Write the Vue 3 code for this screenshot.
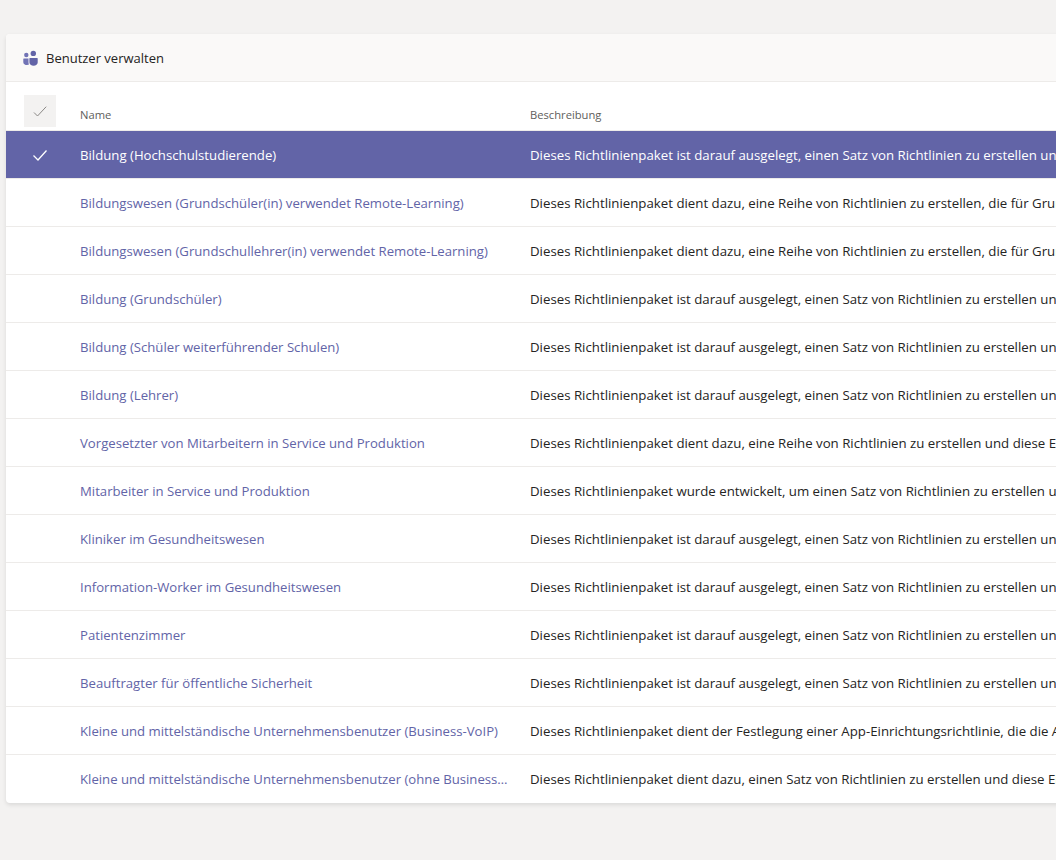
<script setup>
const rows = [
  { name: 'Bildung (Hochschulstudierende)', text: 'Dieses Richtlinienpaket ist darauf ausgelegt, einen Satz von Richtlinien zu erstellen und', selected: true },
  { name: 'Bildungswesen (Grundschüler(in) verwendet Remote-Learning)', text: 'Dieses Richtlinienpaket dient dazu, eine Reihe von Richtlinien zu erstellen, die für Grundschüler' },
  { name: 'Bildungswesen (Grundschullehrer(in) verwendet Remote-Learning)', text: 'Dieses Richtlinienpaket dient dazu, eine Reihe von Richtlinien zu erstellen, die für Grundschullehrer' },
  { name: 'Bildung (Grundschüler)', text: 'Dieses Richtlinienpaket ist darauf ausgelegt, einen Satz von Richtlinien zu erstellen und' },
  { name: 'Bildung (Schüler weiterführender Schulen)', text: 'Dieses Richtlinienpaket ist darauf ausgelegt, einen Satz von Richtlinien zu erstellen und' },
  { name: 'Bildung (Lehrer)', text: 'Dieses Richtlinienpaket ist darauf ausgelegt, einen Satz von Richtlinien zu erstellen und' },
  { name: 'Vorgesetzter von Mitarbeitern in Service und Produktion', text: 'Dieses Richtlinienpaket dient dazu, eine Reihe von Richtlinien zu erstellen und diese Einstellungen' },
  { name: 'Mitarbeiter in Service und Produktion', text: 'Dieses Richtlinienpaket wurde entwickelt, um einen Satz von Richtlinien zu erstellen und' },
  { name: 'Kliniker im Gesundheitswesen', text: 'Dieses Richtlinienpaket ist darauf ausgelegt, einen Satz von Richtlinien zu erstellen und' },
  { name: 'Information-Worker im Gesundheitswesen', text: 'Dieses Richtlinienpaket ist darauf ausgelegt, einen Satz von Richtlinien zu erstellen und' },
  { name: 'Patientenzimmer', text: 'Dieses Richtlinienpaket ist darauf ausgelegt, einen Satz von Richtlinien zu erstellen und' },
  { name: 'Beauftragter für öffentliche Sicherheit', text: 'Dieses Richtlinienpaket ist darauf ausgelegt, einen Satz von Richtlinien zu erstellen und' },
  { name: 'Kleine und mittelständische Unternehmensbenutzer (Business-VoIP)', text: 'Dieses Richtlinienpaket dient der Festlegung einer App-Einrichtungsrichtlinie, die die App' },
  { name: 'Kleine und mittelständische Unternehmensbenutzer (ohne Business-VoIP)', text: 'Dieses Richtlinienpaket dient dazu, einen Satz von Richtlinien zu erstellen und diese Einstellungen' }
]
</script>

<template>
  <div class="page">
    <section class="card">
      <header class="card-head">
        <svg class="teams-icon" width="16" height="16" viewBox="0 0 16 16">
          <circle cx="10.3" cy="3.4" r="2.7" fill="#6264a7" />
          <circle cx="3.3" cy="5" r="2.2" fill="#7173b5" />
          <path d="M6.900 8h7.300c.3 0 .5.200.5.500v4c0 1.900-1.800 3.200-4.100 3.200s-4.200-1.300-4.200-3.200v-4c0-.3.200-.5.500-.5z" fill="#6264a7" />
          <path d="M.8 8.500h4.700v4c0 .8.200 1.500.5 2.100-.5.300-1.200.5-1.900.5C2 15.100.3 14 .3 12.200V9c0-.3.200-.5.500-.5z" fill="#7173b5" />
        </svg>
        <span>Benutzer verwalten</span>
      </header>

      <div class="row head-row">
        <div class="check-cell">
          <span class="check-box">
            <svg width="14" height="14" viewBox="0 0 14 14"><path d="M1 8.500l3.500 3.500L13.200 2.700" fill="none" stroke="#8a8886" stroke-width="1" /></svg>
          </span>
        </div>
        <div class="name-cell head-label">Name</div>
        <div class="desc-cell head-label">Beschreibung</div>
      </div>

      <div v-for="r in rows" :key="r.name" class="row item" :class="{ selected: r.selected }">
        <div class="check-cell">
          <svg v-if="r.selected" width="14" height="14" viewBox="0 0 14 14"><path d="M.5 7.500l4.500 4.500L13.500 2.500" fill="none" stroke="#fff" stroke-width="1.300" /></svg>
        </div>
        <div class="name-cell link">{{ r.name }}</div>
        <div class="desc-cell">{{ r.text }}</div>
      </div>
    </section>
  </div>
</template>

<style>
html, body {
  margin: 0;
  background: #f3f2f1;
  overflow: hidden;
}
</style>

<style scoped>
.page {
  height: 860px;
  padding: 34px 0 0 6px;
  box-sizing: border-box;
  font-family: "Open Sans", "Noto Sans", sans-serif;
  color: #252423;
  overflow: hidden;
}

.card {
  width: 1300px;
  background: #fff;
  border-radius: 4px;
  box-shadow: 0 2px 4px rgba(0, 0, 0, 0.1);
}

.card-head {
  height: 47px;
  display: flex;
  align-items: center;
  gap: 7px;
  padding-left: 17px;
  background: #faf9f8;
  border-bottom: 1px solid #edebe9;
  border-radius: 4px 4px 0 0;
  font-size: 13px;
}

.teams-icon {
  flex: none;
}

.row {
  display: flex;
  align-items: center;
  box-sizing: border-box;
  white-space: nowrap;
}

.head-row {
  height: 49px;
  align-items: flex-end;
  border-bottom: 1px solid #edebe9;
}

.head-row .check-cell {
  box-sizing: border-box;
  height: 48px;
  align-items: flex-start;
  padding-top: 13px;
}

.head-label {
  font-size: 11.2px;
  color: #605e5c;
  padding-bottom: 8px;
}

.item {
  height: 48px;
  font-size: 13.25px;
  border-bottom: 1px solid #edebe9;
}

.item:last-child {
  border-bottom: 0;
}

.selected {
  background: #6264a7;
  color: #fff;
}

.check-cell {
  width: 68px;
  display: flex;
  justify-content: center;
  flex: none;
}

.check-box {
  width: 32px;
  height: 32px;
  display: flex;
  align-items: center;
  justify-content: center;
  background: #f3f2f1;
}

.name-cell {
  width: 456px;
  flex: none;
  box-sizing: border-box;
  padding: 0 21px 0 6px;
  overflow: hidden;
  text-overflow: ellipsis;
}

.head-label.name-cell {
  padding-bottom: 8px;
}

.link {
  color: #6264a7;
  font-size: 13.17px;
}

.selected .link {
  color: #fff;
  font-size: 13.2px;
}

.desc-cell {
  flex: 1;
}
</style>
